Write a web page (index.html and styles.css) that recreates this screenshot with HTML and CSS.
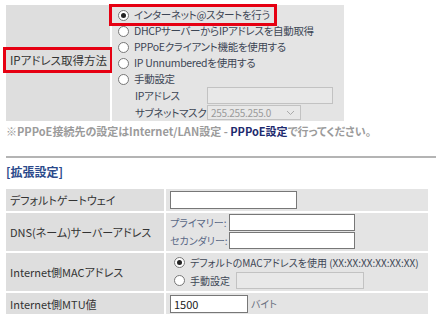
FILE: index.html
```html
<!DOCTYPE html>
<html lang="ja">
<head>
  <meta charset="UTF-8" />
  <title>Internet設定</title>
  <meta name="viewport" content="width=device-width, initial-scale=1.0" />
  <link rel="stylesheet" href="styles.css">
</head>
<body>

  <div class="acq">
    <div class="acq-label"><span class="mark-label">IPアドレス取得方法</span></div>
    <div class="acq-body">
      <label class="opt opt-mark"><input type="radio" name="mode" checked> インターネット@スタートを行う</label>
      <label class="opt"><input type="radio" name="mode"> DHCPサーバーからIPアドレスを自動取得</label>
      <label class="opt"><input type="radio" name="mode"> PPPoEクライアント機能を使用する</label>
      <label class="opt"><input type="radio" name="mode"> IP Unnumberedを使用する</label>
      <label class="opt"><input type="radio" name="mode"> 手動設定</label>
      <div class="field">
        <span class="field-name">IPアドレス</span>
        <input type="text" class="txt txt-ip" disabled>
      </div>
      <div class="field">
        <span class="field-name">サブネットマスク</span>
        <div class="select">
          <span>255.255.255.0</span>
          <svg width="9" height="6" viewBox="0 0 9 6"><path d="M1 1l3.5 3.5L8 1" fill="none" stroke="#aaa" stroke-width="1"/></svg>
        </div>
      </div>
    </div>
  </div>

  <p class="note">※PPPoE接続先の設定はInternet/LAN設定 - <a href="#">PPPoE設定</a>で行ってください。</p>

  <hr class="divider">

  <h3 class="section">[拡張設定]</h3>

  <div class="ext">
    <div class="ext-label">デフォルトゲートウェイ</div>
    <div class="ext-body"><input type="text" class="txt txt-gw"></div>

    <div class="ext-label">DNS(ネーム)サーバーアドレス</div>
    <div class="ext-body dns">
      <div class="dns-row"><span class="sub">プライマリー:</span><input type="text" class="txt txt-dns"></div>
      <div class="dns-row"><span class="sub">セカンダリー:</span><input type="text" class="txt txt-dns"></div>
    </div>

    <div class="ext-label">Internet側MACアドレス</div>
    <div class="ext-body mac">
      <label class="opt small"><input type="radio" name="mac" checked> デフォルトのMACアドレスを使用 (XX:XX:XX:XX:XX:XX)</label>
      <label class="opt small"><input type="radio" name="mac"> 手動設定 <input type="text" class="txt txt-mac" disabled></label>
    </div>

    <div class="ext-label">Internet側MTU値</div>
    <div class="ext-body"><input type="text" class="txt txt-mtu" value="1500"><span class="unit">バイト</span></div>
  </div>

</body>
</html>
```

FILE: styles.css
```css
body {
  margin: 0;
  padding: 5px 0 0 6px;
  font-family: "Noto Sans CJK JP", sans-serif;
  font-size: 11px;
  line-height: 1.3;
  font-feature-settings: "palt";
  color: #333;
  background: #fff;
}

.acq {
  display: grid;
  grid-template-columns: 104px 232px;
  column-gap: 2px;
  width: 338px;
  height: 115px;
}

.acq-label {
  background: #dedede;
  display: flex;
  align-items: center;
  padding-bottom: 6px;
  box-sizing: border-box;
}

.mark-label {
  padding: 3px 3px 3px 4px;
  outline: 3px solid #e60012;
  font-size: 11.5px;
  white-space: nowrap;
}

.acq-body {
  background: #e4e4e4;
  padding: 2px 0 0 6px;
}

.opt {
  display: flex;
  align-items: center;
  gap: 5px;
  height: 16px;
  font-size: 10.5px;
  letter-spacing: -0.3px;
  color: #3d4655;
  white-space: nowrap;
}

.opt-mark {
  width: max-content;
  margin: 0 0 0 -6px;
  padding: 0 4px 0 6px;
  outline: 3px solid #e60012;
}

input[type="radio"] {
  appearance: none;
  margin: 0;
  width: 11px;
  height: 11px;
  border: 1px solid #777;
  border-radius: 50%;
  background: #fff;
  box-sizing: border-box;
  display: grid;
  place-items: center;
}

input[type="radio"]:checked::after {
  content: "";
  width: 5px;
  height: 5px;
  border-radius: 50%;
  background: #222;
}

.field {
  display: flex;
  align-items: center;
  padding-left: 17px;
  height: 17px;
  font-size: 10.5px;
  letter-spacing: -0.3px;
  color: #3d4655;
  white-space: nowrap;
}

.field-name {
  width: 72px;
}

.txt {
  box-sizing: border-box;
  height: 17px;
  margin: 0;
  padding: 0 3px;
  border: 1px solid #777;
  background: #fff;
  font: inherit;
  letter-spacing: 0;
  color: #222;
}

.txt:disabled {
  border-color: #c2c2c2;
  background: #e8e8e8;
}

.txt-ip {
  width: 126px;
}

.select {
  display: flex;
  align-items: center;
  justify-content: space-between;
  box-sizing: border-box;
  width: 94px;
  height: 15px;
  padding: 0 5px 0 3px;
  border: 1px solid #c2c2c2;
  background: #e8e8e8;
  color: #9a9a9a;
  font-size: 10px;
}

.note {
  margin: 4px 0 0;
  color: #9b9b9b;
  font-size: 11px;
  font-weight: bold;
}

.note a {
  color: #1d2a6e;
  text-decoration: none;
}

.divider {
  margin: 18px 0 0;
  border: none;
  border-top: 2px solid #b4b4b4;
}

.section {
  margin: 6px 0 9px;
  font-size: 12px;
  color: #2b4a8b;
}

.ext {
  display: grid;
  grid-template-columns: 158px 262px;
  grid-template-rows: 22px 38px 38px 22px;
  gap: 2px;
}

.ext-label {
  background: #dedede;
  display: flex;
  align-items: center;
  padding-left: 4px;
  white-space: nowrap;
}

.ext-body {
  background: #e4e4e4;
  display: flex;
  align-items: center;
  padding-left: 4px;
}

.txt-gw {
  width: 127px;
  height: 18px;
}

.dns {
  flex-direction: column;
  align-items: flex-start;
  justify-content: center;
  gap: 1px;
}

.dns-row {
  display: flex;
  align-items: center;
}

.sub {
  width: 59px;
  font-size: 10px;
  color: #5a6886;
}

.txt-dns {
  width: 126px;
}

.mac {
  flex-direction: column;
  align-items: flex-start;
  justify-content: center;
  padding-left: 8px;
}

.small {
  font-size: 10px;
  letter-spacing: 0;
  height: 18px;
}

.txt-mac {
  width: 128px;
  margin-left: 1px;
}

.txt-mtu {
  width: 78px;
  height: 18px;
  font-size: 11px;
}

.unit {
  margin-left: 3px;
  font-size: 10px;
  color: #6a7080;
}
```
